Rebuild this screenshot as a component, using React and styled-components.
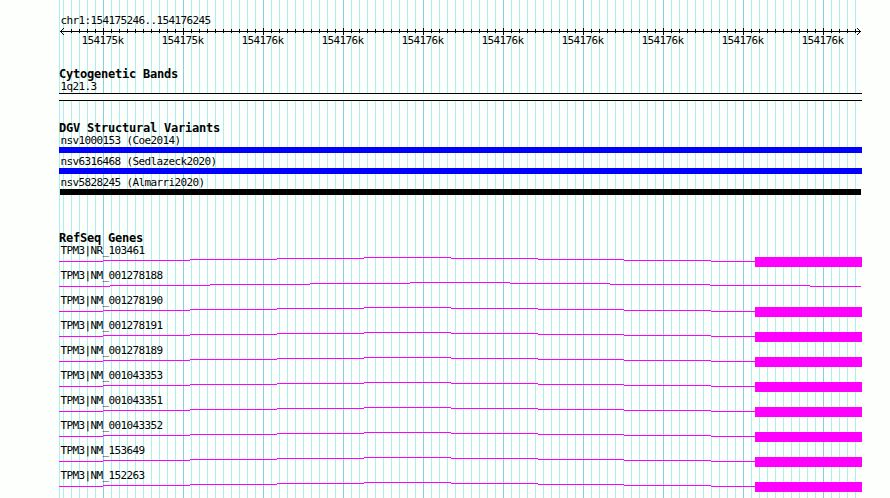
import React from 'react'
import styled, { createGlobalStyle } from 'styled-components'

const MAGENTA = '#ff00ff'
const MINOR = '#afeeee'
const MAJOR = '#87ceeb'

const GlobalStyle = createGlobalStyle`
    body {
        margin: 0;
        background: #fdfffc;
        overflow: hidden;
    }
`

const Browser = styled.main`
    box-sizing: border-box;
    width: 890px;
    height: 498px;
    padding: 15px 28px 0 59px;
    overflow: hidden;
    color: #000;
    font: 11px/12px 'DejaVu Sans Mono', monospace;
    letter-spacing: -0.622px;
    white-space: pre;
    background:
        linear-gradient(${MINOR}, ${MINOR}) 59px 0 / 1px 100% no-repeat,
        repeating-linear-gradient(90deg, ${MAJOR} 0 1px, transparent 1px 80px) 103px 0 / 721px 100% no-repeat,
        repeating-linear-gradient(90deg, ${MINOR} 0 1px, transparent 1px 8px) 63px 0 / 793px 100% no-repeat,
        #fdfffc;
`

const Position = styled.div`
    height: 12px;
    padding-left: 1.5px;
`

const Ruler = styled.svg`
    display: block;
    width: 803px;
    height: 8px;
    shape-rendering: crispEdges;
`

const Scale = styled.div`
    display: grid;
    grid-template-columns: repeat(10, 80px);
    height: 33px;
    padding-left: 22.5px;
`

const Track = styled.section`
    height: ${props => props.$height}px;
`

const TrackTitle = styled.h2`
    margin: 0;
    height: 12px;
    font-size: 12px;
    line-height: 12px;
    font-weight: bold;
    letter-spacing: -0.224px;
`

const Label = styled.div`
    height: 12px;
    padding-left: 1.5px;
    line-height: 14px;
`

const Band = styled.div`
    box-sizing: border-box;
    width: 803px;
    height: 8px;
    margin-top: 1px;
    border: solid #000;
    border-width: 1px 0;
    background: #fdfffc;
`

const Variant = styled.div`
    height: 21px;
`

const VariantBar = styled.div`
    width: ${props => props.$inset ? 801 : 803}px;
    height: 6px;
    margin: 1px 0 0 ${props => props.$inset ? 1 : 0}px;
    background: ${props => props.$color};
`

const Gene = styled.div`
    height: 25px;
`

const GeneModel = styled.svg`
    display: block;
    width: 803px;
    height: 13px;
    fill: ${MAGENTA};
    shape-rendering: crispEdges;
`

const scale = ['154175k', '154175k', '154176k', '154176k', '154176k',
    '154176k', '154176k', '154176k', '154176k', '154176k']

const variants = [
    { name: 'nsv1000153 (Coe2014)', color: '#0000ff' },
    { name: 'nsv6316468 (Sedlazeck2020)', color: '#0000ff' },
    { name: 'nsv5828245 (Almarri2020)', color: '#000', inset: true },
]

const genes = [
    'NR_103461', 'NM_001278188', 'NM_001278190', 'NM_001278191', 'NM_001278189',
    'NM_001043353', 'NM_001043351', 'NM_001043352', 'NM_153649', 'NM_152263',
]

// start x and y of each flat step of an intron
const exonSteps = [[0, 5], [44, 4], [131, 3], [218, 2], [305, 1], [392, 2], [479, 3], [565, 4], [652, 5], [696, 5]]
const intronSteps = [[0, 5], [51, 4], [151, 3], [251, 2], [351, 1], [451, 2], [551, 3], [651, 4], [751, 5], [802, 5]]

const Arrow = () => {
    const ticks = Array.from({ length: 99 }, (_, i) => 12 + i * 8)
    return (
        <Ruler viewBox="0 0 803 8">
            <rect x="1" y="4" width="801" height="1" />
            {ticks.map(x => {
                const major = (x - 44) % 80 === 0
                return <rect key={x} x={x} y={major ? 1 : 2} width="1" height={major ? 7 : 4} />
            })}
            {[1, 2, 3].map(n => (
                <React.Fragment key={n}>
                    <rect x={n + 1} y={4 - n} width="1" height="1" />
                    <rect x={n + 1} y={4 + n} width="1" height="1" />
                    <rect x={801 - n} y={4 - n} width="1" height="1" />
                    <rect x={801 - n} y={4 + n} width="1" height="1" />
                </React.Fragment>
            ))}
        </Ruler>
    )
}

const Transcript = ({ exon }) => {
    const steps = exon ? exonSteps : intronSteps
    return (
        <GeneModel viewBox="0 0 803 13">
            {steps.slice(0, -1).map(([x, y], i) => (
                <rect key={x} x={x} y={y} width={steps[i + 1][0] - x} height="1" />
            ))}
            {exon && <rect x="696" y="1" width="107" height="10" />}
        </GeneModel>
    )
}

const App = () => {

    return (
        <>
            <GlobalStyle />
            <Browser>
                <Position>chr1:154175246..154176245</Position>
                <Arrow />
                <Scale>
                    {scale.map((text, i) => <span key={i}>{text}</span>)}
                </Scale>
                <Track $height={54}>
                    <TrackTitle>Cytogenetic Bands</TrackTitle>
                    <Label>1q21.3</Label>
                    <Band />
                </Track>
                <Track $height={110}>
                    <TrackTitle>DGV Structural Variants</TrackTitle>
                    {variants.map(({ name, color, inset }) => (
                        <Variant key={name}>
                            <Label>{name}</Label>
                            <VariantBar $color={color} $inset={inset} />
                        </Variant>
                    ))}
                </Track>
                <Track $height={266}>
                    <TrackTitle>RefSeq Genes</TrackTitle>
                    {genes.map(name => (
                        <Gene key={name}>
                            <Label>TPM3|{name}</Label>
                            <Transcript exon={name !== 'NM_001278188'} />
                        </Gene>
                    ))}
                </Track>
            </Browser>
        </>
    )
}

export default App
